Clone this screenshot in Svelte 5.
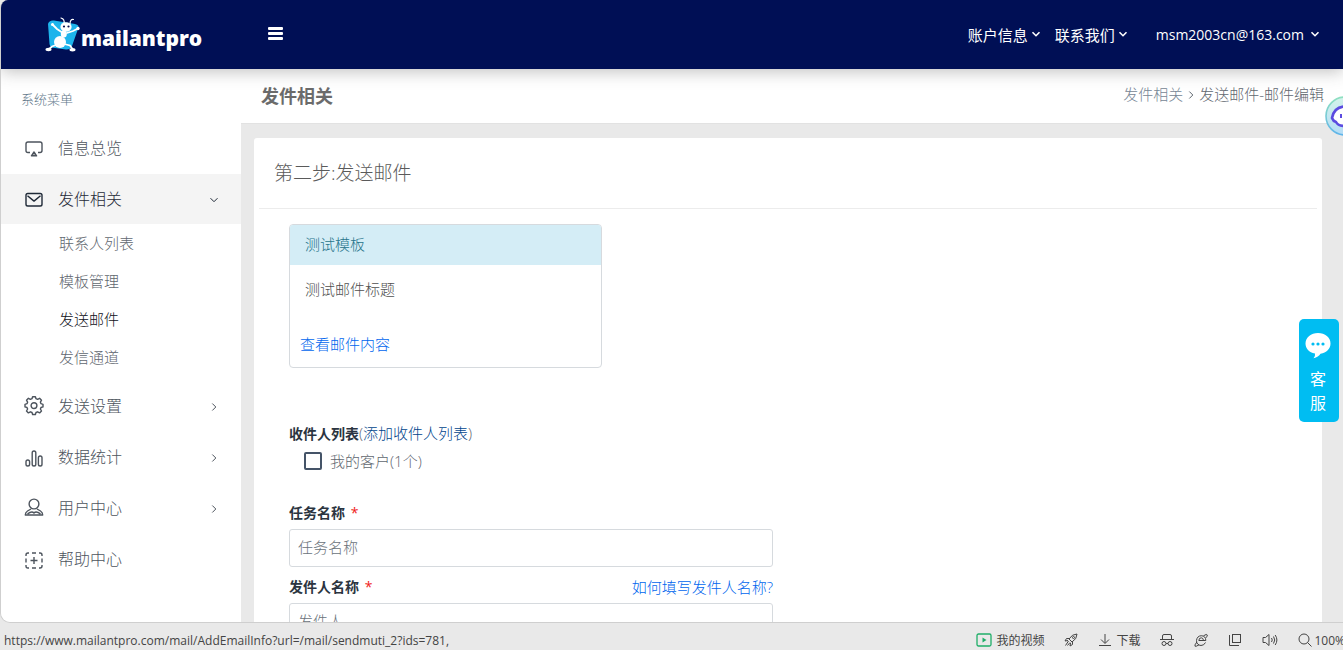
<script>
    let menuBefore = [{ label: "信息总览", icon: "monitor" }];
    let subItems = [
        { label: "联系人列表" },
        { label: "模板管理" },
        { label: "发送邮件", active: true },
        { label: "发信通道" },
    ];
    let menuAfter = [
        { label: "发送设置", icon: "gear", arrow: true },
        { label: "数据统计", icon: "bars", arrow: true },
        { label: "用户中心", icon: "user", arrow: true },
        { label: "帮助中心", icon: "help" },
    ];
    let taskName = "";
    let senderName = "";
    let checked = false;
</script>

{#snippet chevron(dir)}
    <svg class="chevron" width="10" height="10" viewBox="0 0 10 10" fill="none" stroke="currentColor">
        {#if dir == "down"}
            <path d="M1.5 3.2 5 6.7 8.5 3.2" />
        {:else}
            <path d="M3.3 1.5 6.8 5 3.3 8.5" />
        {/if}
    </svg>
{/snippet}

{#snippet menuIcon(name)}
    <svg class="menu-icon" width="20" height="20" viewBox="0 0 20 20" fill="none" stroke="currentColor" stroke-width="1.4" stroke-linejoin="round">
        {#if name == "monitor"}
            <path d="M6 14.5H4Q2 14.5 2 12.5V6Q2 4 4 4H16Q18 4 18 6V12.5Q18 14.5 16 14.5H14" />
            <path d="M10 14 12.6 17.8H7.4Z" fill="currentColor" fill-opacity="0.4" />
        {:else if name == "mail"}
            <rect x="2" y="4.5" width="16" height="12.5" rx="1.8" />
            <path d="M3.5 6.7 10 12.1 16.5 6.7" />
        {:else if name == "gear"}
            <path d="M8.6.7H11.4L12 2.700 13.600 3.400 15.600 2.300 17.500 4.200 16.400 6.200 17 7.700 19 8.300V10.900L17 11.500 16.400 13 17.500 15 15.600 16.900 13.600 15.800 12 16.500 11.400 18.500H8.600L8 16.500 6.400 15.800 4.400 16.900 2.500 15 3.600 13 3 11.500 1 10.900V8.300L3 7.700 3.600 6.200 2.500 4.200 4.400 2.300 6.400 3.400 8 2.700Z" />
            <circle cx="10" cy="9.600" r="2.900" />
        {:else if name == "bars"}
            <rect x="2" y="13" width="3.6" height="6" rx="1.8" />
            <rect x="8.2" y="4" width="3.6" height="15" rx="1.8" />
            <rect x="14.4" y="9" width="3.6" height="10" rx="1.8" />
        {:else if name == "user"}
            <circle cx="10" cy="6" r="4.9" />
            <path d="M7 11 3.500 13Q1.300 14.300 1.300 17H18.700Q18.700 14.300 16.500 13L13 11M3.500 15.800Q8 12.700 10 15 12 12.700 16.500 15.800" />
        {:else}
            <path d="M2 7V6Q2 4 4 4H5M8 4H12M15 4H16Q18 4 18 6V7M18 9.500V13.500M18 16V17Q18 19 16 19H15M12 19H8M5 19H4Q2 19 2 17V16M2 13.500V9.500" />
            <path d="M10 8V15M6.5 11.5H13.5" />
        {/if}
    </svg>
{/snippet}

{#snippet menuLink(item)}
    <a href="#menu" class="menu-link">
        {@render menuIcon(item.icon)}
        <span>{item.label}</span>
        {#if item.arrow}
            {@render chevron("right")}
        {/if}
    </a>
{/snippet}

<div class="screen">
    <div class="window">
        <header>
            <a href="#home" class="logo" aria-label="mailantpro">
                <svg width="36" height="36" viewBox="0 0 36 36">
                    <path d="M3 7Q4 3 9 3.500L30 7Q35 8 33 12L27 29Q25 33 21 32.500L10 31Q5 31 4.500 27Z" fill="#1db4ec" />
                    <g fill="none" stroke="#fff" stroke-linecap="round">
                        <path d="M19 7Q20 2 16 1M25 7Q25 2 28.500 2.500" stroke-width="1.200" />
                        <path d="M18 16 12 12 7.500 7.500M22 16 28 14 33 11.500M11 28 7 29.500 4 32M19 27 25 28.500 27.500 32" stroke-width="1.800" />
                    </g>
                    <g fill="#fff">
                        <ellipse cx="21" cy="10" rx="5.600" ry="4.800" />
                        <ellipse cx="18.800" cy="17" rx="3" ry="3.500" />
                        <ellipse cx="15" cy="25" rx="6" ry="6" />
                        <ellipse cx="3.500" cy="32.500" rx="3" ry="1.700" />
                        <ellipse cx="27.500" cy="32.700" rx="3" ry="1.700" />
                        <circle cx="7.500" cy="7.500" r="1.500" />
                        <circle cx="33" cy="11.500" r="1.700" />
                    </g>
                    <g fill="#06104f">
                        <circle cx="19" cy="9.500" r="1.100" />
                        <circle cx="23.500" cy="9.500" r="1.100" />
                    </g>
                </svg>
                <span>mailantpro</span>
            </a>
            <button class="burger" aria-label="menu"><i></i><i></i><i></i></button>
            <nav class="top-nav">
                <a href="#account">账户信息{@render chevron("down")}</a>
                <a href="#contact">联系我们{@render chevron("down")}</a>
                <a href="#user" class="mail">msm2003cn@163.com{@render chevron("down")}</a>
            </nav>
        </header>

        <div class="body">
            <aside>
                <p class="menu-title">系统菜单</p>
                {#each menuBefore as item}
                    {@render menuLink(item)}
                {/each}
                <a href="#send" class="menu-link open">
                    {@render menuIcon("mail")}
                    <span>发件相关</span>
                    {@render chevron("down")}
                </a>
                <div class="sub-menu">
                    {#each subItems as item}
                        <a href="#sub" class:active={item.active}>{item.label}</a>
                    {/each}
                </div>
                {#each menuAfter as item}
                    {@render menuLink(item)}
                {/each}
            </aside>

            <main>
                <div class="page-title">
                    <h1>发件相关</h1>
                    <div class="crumbs">
                        <a href="#send">发件相关</a>
                        {@render chevron("right")}
                        <span>发送邮件-邮件编辑</span>
                    </div>
                </div>

                <section class="card">
                    <h2>第二步:发送邮件</h2>
                    <form>
                        <div class="template">
                            <div class="template-head">测试模板</div>
                            <p>测试邮件标题</p>
                            <a href="#view">查看邮件内容</a>
                        </div>

                        <div class="list-title">
                            <b>收件人列表</b>(<a href="#add">添加收件人列表</a>)
                        </div>
                        <label class="check">
                            <input type="checkbox" bind:checked />
                            我的客户(1个)
                        </label>

                        <div class="field">
                            <div class="field-head">
                                <label for="task">任务名称 <em>*</em></label>
                            </div>
                            <input id="task" type="text" placeholder="任务名称" bind:value={taskName} />
                        </div>
                        <div class="field">
                            <div class="field-head">
                                <label for="sender">发件人名称 <em>*</em></label>
                                <a href="#how">如何填写发件人名称?</a>
                            </div>
                            <input id="sender" type="text" placeholder="发件人" bind:value={senderName} />
                        </div>
                    </form>
                </section>
            </main>
        </div>
    </div>

    <footer>
        <span class="url">https://www.mailantpro.com/mail/AddEmailInfo?url=/mail/sendmuti_2?ids=781,</span>
        <div class="tools">
            <button>
                <svg width="16" height="14" viewBox="0 0 16 14" fill="none" stroke="#1fae68" stroke-width="1.3">
                    <rect x="1" y="1" width="14" height="12" rx="1.5" />
                    <path d="M6.5 4.5V9.5L10.5 7Z" fill="#1fae68" stroke="none" />
                </svg>
                我的视频
            </button>
            <button aria-label="加速">
                <svg width="14" height="14" viewBox="0 0 14 14" fill="none" stroke="currentColor">
                    <path d="M13 1Q8 1 5 6L8 9Q13 6 13 1ZM5.2 5.5 2.5 5.5 1 8 4 7.5M8.5 8.8 8.5 11.5 6 13 6.5 10M4.5 8 1.5 12.5M6 9.5 3.5 12.5" />
                    <circle cx="9.5" cy="4.5" r="1" />
                </svg>
            </button>
            <button>
                <svg width="14" height="14" viewBox="0 0 14 14" fill="none" stroke="currentColor">
                    <path d="M7 1V10M3 6.5 7 10.5 11 6.5M1 12.5H13" />
                </svg>
                下载
            </button>
            <button aria-label="无痕">
                <svg width="14" height="14" viewBox="0 0 14 14" fill="none" stroke="currentColor">
                    <path d="M2.5 6.5V3Q2.5 1.5 4 1.5H10Q11.5 1.5 11.5 3V6.5M0 6.5H14" />
                    <circle cx="4" cy="10.5" r="2" />
                    <circle cx="10" cy="10.5" r="2" />
                    <path d="M6 10.5H8" />
                </svg>
            </button>
            <button aria-label="浏览器">
                <svg width="14" height="14" viewBox="0 0 14 14" fill="none" stroke="currentColor">
                    <path d="M11.5 9.5Q10 12.5 7 12.5Q2.500 12 2.500 7.500Q3 3 7.300 2.700Q11.800 3 11.800 7.500H4.800Q5 4.800 7.300 4.800Q9.300 5 9.500 7.500M9.500 2.800Q13 .5 13.300 2Q13.500 3 12 4.800M2.800 9Q.2 12.500 1 13.200Q2 13.800 5 11.800" />
                </svg>
            </button>
            <button aria-label="窗口">
                <svg width="14" height="14" viewBox="0 0 14 14" fill="none" stroke="currentColor">
                    <rect x="4.5" y="1.5" width="8" height="8" />
                    <path d="M1.5 2V12.5H11" />
                </svg>
            </button>
            <button aria-label="声音">
                <svg width="16" height="14" viewBox="0 0 16 14" fill="none" stroke="currentColor">
                    <path d="M7 1.5V12.5L3.5 9.5H1V4.5H3.5ZM9.5 5Q11 7 9.5 9M11.5 3.5Q14 7 11.5 10.5M13.2 2Q16.6 7 13.2 12" />
                </svg>
            </button>
            <button class="zoom">
                <svg width="14" height="14" viewBox="0 0 14 14" fill="none" stroke="currentColor">
                    <circle cx="6" cy="6" r="5" />
                    <path d="M9.5 9.5 13.5 13.5" />
                </svg>
                100%
            </button>
        </div>
    </footer>

    <button class="assistant" aria-label="助手">
        <svg width="40" height="40" viewBox="0 0 40 40">
            <defs>
                <linearGradient id="ring" x1="0" y1="0" x2="0" y2="1">
                    <stop offset="0" stop-color="#8fe0c0" />
                    <stop offset="1" stop-color="#5fb4ea" />
                </linearGradient>
                <linearGradient id="fill" x1="0" y1="0" x2="0" y2="1">
                    <stop offset="0" stop-color="#d4f3ea" />
                    <stop offset="1" stop-color="#b4dcf6" />
                </linearGradient>
            </defs>
            <circle cx="20" cy="20" r="19" fill="url(#fill)" stroke="url(#ring)" stroke-width="1.6" />
            <path d="M7 22Q9 11 20 10.5Q31 11 33 22Q30 30 20 30Q13 30 11 26Q8 25 7 22Z" fill="#fff" stroke="#5b4be0" stroke-width="2.6" />
            <path d="M16 18V22M24 18V22" stroke="#5b4be0" stroke-width="2" />
        </svg>
    </button>

    <button class="service">
        <svg width="26" height="27" viewBox="0 0 26 27">
            <path d="M13 1C6 1 0.5 5.5 0.5 11.5C0.5 16.5 4 20.5 10 21.6Q10.5 24.5 8.5 26.3Q13.5 25 15.5 21.7C21.5 21 25.5 16.8 25.5 11.5C25.5 5.5 20 1 13 1Z" fill="#fff" />
            <g fill="#00bdf2">
                <circle cx="8" cy="12" r="1.6" />
                <circle cx="13" cy="12" r="1.6" />
                <circle cx="18" cy="12" r="1.6" />
            </g>
        </svg>
        <span>客</span>
        <span>服</span>
    </button>
</div>

<style>
    :global(body) {
        margin: 0;
        background: #e9e9e9;
    }
    .screen {
        position: relative;
        display: flex;
        flex-direction: column;
        height: 100vh;
        overflow: hidden;
        font-family: "Open Sans", "Noto Sans CJK SC", sans-serif;
        font-size: 15px;
        font-weight: 300;
        color: #5f676f;
    }
    a {
        color: inherit;
        text-decoration: none;
    }
    button {
        font: inherit;
        color: inherit;
        background: none;
        border: 0;
        padding: 0;
    }
    .window {
        flex: 1;
        min-height: 0;
        display: flex;
        flex-direction: column;
        overflow: hidden;
        border: solid #cfcfcf;
        border-width: 0 0 1px 1px;
        border-radius: 8px 0 0 10px;
        background: #e9e9e9;
    }

    header {
        position: relative;
        z-index: 1;
        flex: none;
        display: flex;
        align-items: center;
        height: 69px;
        background: #000f55;
        color: #fff;
        box-shadow: 0 2px 16px rgba(60, 60, 60, 0.35);
    }
    .logo {
        display: flex;
        align-items: center;
        width: 223px;
        padding-left: 44px;
        font-size: 21px;
        font-weight: 800;
    }
    .logo span {
        padding-top: 6px;
    }
    .burger {
        display: flex;
        flex-direction: column;
        gap: 2px;
        width: 15px;
        padding-bottom: 3px;
    }
    .burger i {
        height: 3px;
        border-radius: 1px;
        background: #fff;
    }
    .top-nav {
        display: flex;
        gap: 14px;
        margin-left: auto;
        padding-right: 23px;
        padding-bottom: 1px;
        font-weight: 400;
    }
    .top-nav a {
        display: flex;
        align-items: center;
        gap: 3px;
    }
    .top-nav .chevron {
        stroke-width: 1.6;
    }
    .top-nav .mail {
        gap: 6px;
        margin-left: 14px;
        font-size: 14px;
    }

    .body {
        flex: 1;
        min-height: 0;
        display: flex;
    }
    aside {
        flex: none;
        width: 240px;
        background: #fff;
    }
    .menu-title {
        margin: 0;
        padding: 20px 20px 14px;
        font-size: 13px;
        line-height: 20px;
        color: #62788a;
    }
    .menu-link {
        display: flex;
        align-items: center;
        height: 50px;
        margin-bottom: 1px;
        padding: 0 22px 0 23px;
        font-size: 16px;
        color: #4d545d;
    }
    .menu-link span {
        flex: 1;
        padding: 0 0 3px 14px;
    }
    .menu-link .chevron {
        margin-top: 2px;
    }
    .menu-link.open {
        margin-bottom: 0;
        background: #f4f4f4;
        color: #1f2937;
    }
    .sub-menu {
        display: flex;
        flex-direction: column;
        padding-bottom: 5px;
    }
    .sub-menu a {
        padding-left: 58px;
        line-height: 38px;
    }
    .sub-menu .active {
        color: #101020;
    }

    main {
        flex: 1;
        min-width: 0;
        display: flex;
        flex-direction: column;
    }
    .page-title {
        flex: none;
        display: flex;
        align-items: center;
        justify-content: space-between;
        height: 52px;
        padding: 0 19px 2px 20px;
        border-bottom: 1px solid #e2e2e2;
        background: #fff;
    }
    h1 {
        margin: 0;
        font-size: 18px;
        font-weight: 700;
        color: #6b6b6b;
    }
    .crumbs {
        display: flex;
        align-items: center;
        gap: 3px;
        padding-bottom: 4px;
    }
    .crumbs .chevron {
        margin-top: 4px;
    }
    .crumbs a {
        color: #768594;
    }
    .card {
        flex: 1;
        min-height: 0;
        overflow: hidden;
        margin: 14px 21px 0 13px;
        padding: 0 5px;
        border-radius: 3px 3px 0 0;
        background: #fff;
    }
    h2 {
        margin: 0;
        padding: 1px 15px 0;
        border-bottom: 1px solid #ececec;
        font-size: 19px;
        font-weight: 300;
        line-height: 69px;
        color: #5a5a5a;
    }
    form {
        padding: 15px 30px;
    }
    .template {
        box-sizing: border-box;
        width: 313px;
        height: 144px;
        border: 1px solid #d6dade;
        border-radius: 4px;
        overflow: hidden;
    }
    .template-head {
        padding: 0 15px 2px;
        background: #d4edf6;
        line-height: 38px;
        color: #26748a;
    }
    .template p {
        margin: 0 0 17px;
        padding: 0 15px;
        line-height: 48px;
        color: #505050;
    }
    .template a {
        padding-left: 10px;
        line-height: 28px;
    }
    .template a,
    .field-head a {
        color: #0066ee;
    }
    .list-title {
        margin-top: 52px;
        line-height: 26px;
    }
    .list-title a {
        color: #00448c;
    }
    b,
    .field-head label {
        font-size: 14px;
        font-weight: 700;
        color: #2b3440;
    }
    .check {
        display: flex;
        align-items: center;
        gap: 8px;
        padding-left: 15px;
        line-height: 28px;
    }
    .check input {
        appearance: none;
        width: 18px;
        height: 18px;
        margin: 0;
        border: 2px solid #455468;
        border-radius: 2px;
    }
    .check + .field {
        margin-top: 24px;
    }
    .field {
        width: 484px;
        margin-bottom: 6px;
    }
    .field-head {
        display: flex;
        justify-content: space-between;
        padding-bottom: 2px;
        line-height: 28px;
    }
    em {
        margin-left: 2px;
        font-style: normal;
        font-weight: 400;
        color: #f01c1c;
    }
    .field input {
        display: block;
        box-sizing: border-box;
        width: 100%;
        height: 38px;
        padding: 0 8px 2px;
        border: 1px solid #d6dade;
        border-radius: 3px;
        font: inherit;
    }
    .field input::placeholder {
        color: #6a727a;
    }

    footer {
        flex: none;
        display: flex;
        align-items: center;
        justify-content: space-between;
        height: 20px;
        padding: 7px 0 0 4px;
        overflow: hidden;
        font-size: 12px;
        font-weight: 400;
        white-space: nowrap;
        color: #444;
    }
    .tools {
        display: flex;
        align-items: center;
        gap: 20px;
        margin-right: -2px;
    }
    .tools button {
        display: flex;
        align-items: center;
        gap: 4px;
    }
    .tools .zoom {
        gap: 2px;
    }

    .assistant {
        position: absolute;
        top: 96px;
        right: -22px;
        height: 40px;
        z-index: 2;
    }
    .service {
        position: absolute;
        top: 319px;
        right: 4px;
        z-index: 2;
        display: flex;
        flex-direction: column;
        align-items: center;
        width: 40px;
        padding: 13px 2px 7px 0;
        border-radius: 5px;
        background: #00bdf2;
        color: #fff;
        font-size: 16px;
        font-weight: 400;
        line-height: 24px;
    }
    .service svg {
        margin-bottom: 8px;
    }
</style>
